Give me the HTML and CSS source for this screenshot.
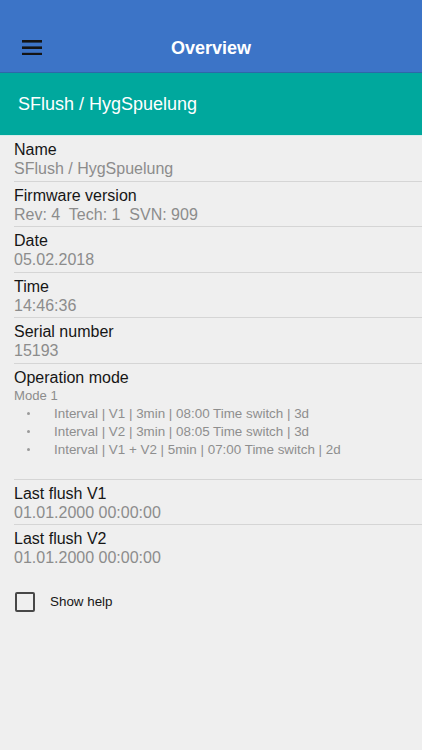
FILE: index.html
```html
<!DOCTYPE html>
<html lang="en">
<head>
<meta charset="utf-8">
<title>Overview</title>
<link rel="stylesheet" href="styles.css">
</head>
<body>
<header class="appbar">
  <button class="menu-btn" aria-label="Menu">
    <svg width="20" height="16" viewBox="0 0 20 16"><rect x="0" y="1" width="20" height="2.6" fill="#141414"/><rect x="0" y="7.4" width="20" height="2.6" fill="#141414"/><rect x="0" y="13.8" width="20" height="2.6" fill="#141414"/></svg>
  </button>
  <h1 class="appbar-title">Overview</h1>
</header>
<div class="subbar">SFlush / HygSpuelung</div>
<main class="list">
  <div class="row">
    <div class="label">Name</div>
    <div class="value">SFlush / HygSpuelung</div>
  </div>
  <div class="row">
    <div class="label">Firmware version</div>
    <div class="value">Rev: 4&nbsp; Tech: 1&nbsp; SVN: 909</div>
  </div>
  <div class="row">
    <div class="label">Date</div>
    <div class="value">05.02.2018</div>
  </div>
  <div class="row">
    <div class="label">Time</div>
    <div class="value">14:46:36</div>
  </div>
  <div class="row">
    <div class="label">Serial number</div>
    <div class="value">15193</div>
  </div>
  <div class="row row-mode">
    <div class="label">Operation mode</div>
    <div class="mode">Mode 1</div>
    <ul class="bullets">
      <li><span class="dot"></span>Interval | V1 | 3min | 08:00 Time switch | 3d</li>
      <li><span class="dot"></span>Interval | V2 | 3min | 08:05 Time switch | 3d</li>
      <li><span class="dot"></span>Interval | V1 + V2 | 5min | 07:00 Time switch | 2d</li>
    </ul>
  </div>
  <div class="row">
    <div class="label">Last flush V1</div>
    <div class="value">01.01.2000 00:00:00</div>
  </div>
  <div class="row row-last">
    <div class="label">Last flush V2</div>
    <div class="value">01.01.2000 00:00:00</div>
  </div>
  <label class="help">
    <span class="checkbox"></span>
    <span class="help-text">Show help</span>
  </label>
</main>
</body>
</html>
```
FILE: styles.css
```css
* { box-sizing: border-box; }
html, body {
  margin: 0;
  padding: 0;
  background: #efefef;
  font-family: "Liberation Sans", Arial, sans-serif;
}
.appbar {
  position: relative;
  height: 73px;
  background: #3c74c7;
  border-bottom: 1px solid #2d68a8;
  display: flex;
  align-items: flex-end;
  justify-content: center;
  padding-bottom: 13px;
}
.menu-btn {
  position: absolute;
  left: 22px;
  top: 39px;
  width: 20px;
  height: 16px;
  padding: 0;
  border: 0;
  background: none;
  display: block;
}
.menu-btn svg { display: block; }
.appbar-title {
  margin: 0;
  color: #ffffff;
  font-size: 18px;
  font-weight: bold;
  line-height: 22px;
}
.subbar {
  height: 63px;
  background: #00a89d;
  border-bottom: 1px solid #d6ecea;
  color: #ffffff;
  font-size: 18px;
  padding-left: 18px;
  display: flex;
  align-items: center;
}
.list {
  display: flex;
  flex-direction: column;
}
.row {
  margin-left: 14px;
  padding: 4px 0 2.5px 0;
  border-bottom: 1px solid #d5d5d5;
}
.row-mode { padding-bottom: 20px; }
.row-last { border-bottom: 0; }
.label {
  font-size: 16px;
  line-height: 19px;
  color: #161616;
}
.value {
  font-size: 16px;
  line-height: 19px;
  color: #8c8c8c;
}
.mode {
  font-size: 13.1px;
  line-height: 18px;
  color: #8c8c8c;
}
.bullets {
  list-style: none;
  margin: 0;
  padding: 0;
}
.bullets li {
  display: flex;
  align-items: center;
  font-size: 13.4px;
  line-height: 18px;
  color: #8e8e8e;
  padding-left: 13px;
}
.dot {
  width: 3px;
  height: 3px;
  border-radius: 50%;
  background: #9a9a9a;
  margin-right: 24px;
  flex: none;
}
.help {
  display: flex;
  align-items: center;
  gap: 15px;
  padding-left: 15px;
  margin-top: 22px;
}
.checkbox {
  width: 20px;
  height: 20px;
  border: 2px solid #484848;
  border-radius: 2px;
  flex: none;
}
.help-text {
  font-size: 13.4px;
  color: #161616;
}
```
